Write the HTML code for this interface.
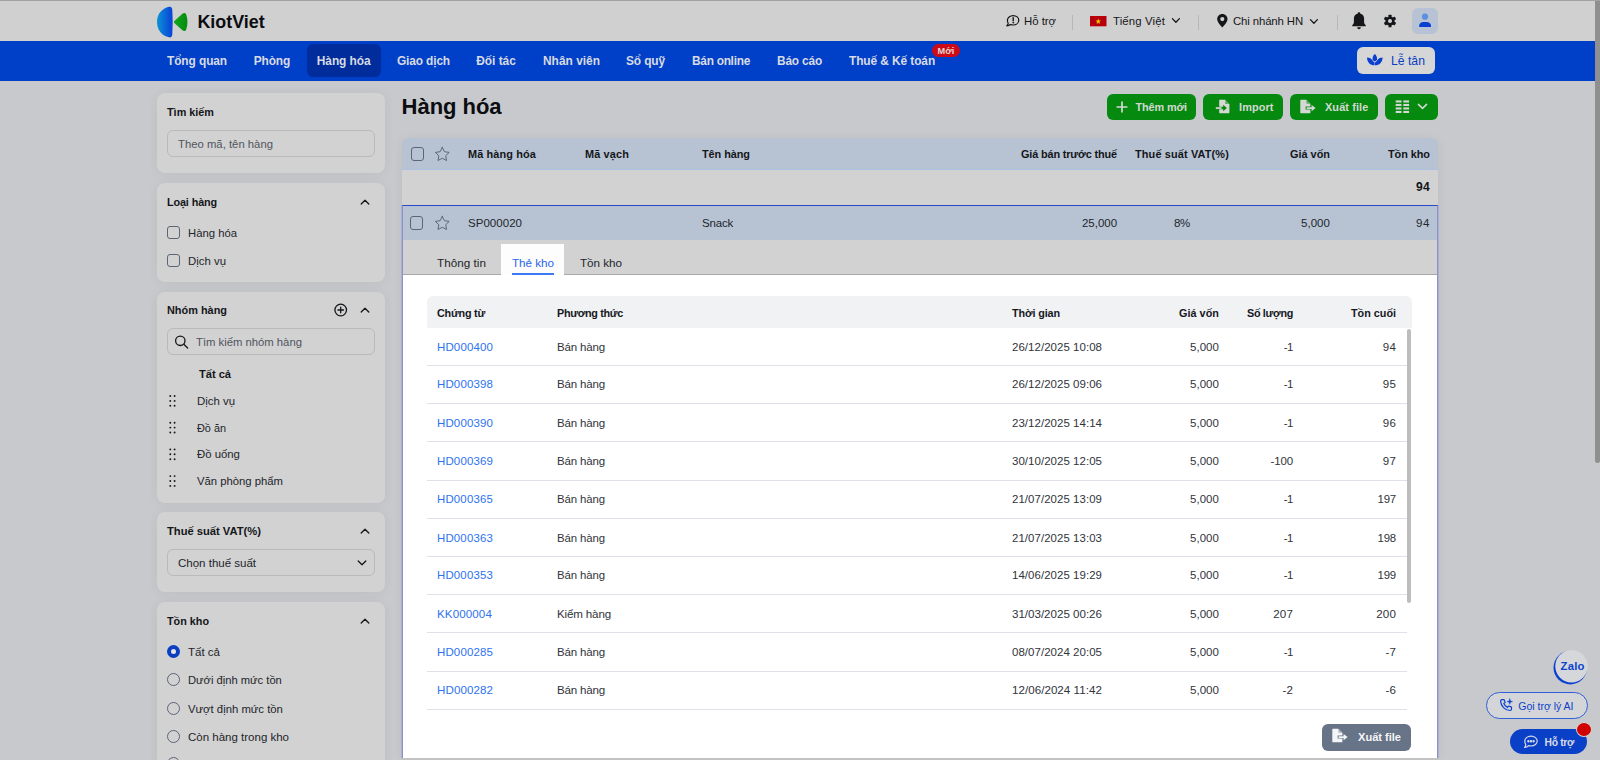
<!DOCTYPE html>
<html lang="vi">
<head>
<meta charset="utf-8">
<title>Hàng hóa - KiotViet</title>
<style>
*{box-sizing:border-box;margin:0;padding:0}
html,body{width:1600px;height:760px;overflow:hidden}
body{background:#c8c9cc;font-family:"Liberation Sans",sans-serif;position:relative}
.a{position:absolute}
.t{position:absolute;white-space:nowrap;font-family:"Liberation Sans",sans-serif}
.card{position:absolute;left:157px;width:228px;background:#d2d2d2;border-radius:8px;box-shadow:0 1px 12px rgba(0,0,0,.06)}
.inp{position:absolute;left:167px;width:208px;height:27px;border:1px solid #b9babd;border-radius:6px;background:#d2d2d2}
.cb{position:absolute;width:13px;height:13px;border:1.2px solid #5b6574;border-radius:3px}
.rd{position:absolute;width:13px;height:13px;border:1.1px solid #5b6574;border-radius:50%}
.sep{position:absolute;top:15px;width:1px;height:15px;background:#b6b7ba}
.gbtn{position:absolute;top:94px;height:26px;background:#05890f;border-radius:6px}
.hl{position:absolute;left:427px;width:980px;height:1px;background:#dfe1e8}
svg{position:absolute;overflow:visible}
</style>
</head>
<body>
<!-- header -->
<div class="a" style="left:0;top:0;width:1595px;height:41px;background:#d0d0d0"></div>
<div class="a" style="left:0;top:0;width:1600px;height:1px;background:#a1a2a2"></div>
<!-- nav -->
<div class="a" style="left:0;top:41px;width:1595px;height:40px;background:#0040c8"></div>
<div class="a" style="left:307px;top:44px;width:74px;height:33px;background:#002c9c;border-radius:6px"></div>
<div class="a" style="left:932px;top:44px;width:28px;height:13px;background:#cf0a16;border-radius:7px"></div>
<div class="a" style="left:1357px;top:47px;width:78px;height:27px;background:#d6d6d6;border-radius:6px"></div>
<!-- page scrollbar -->
<div class="a" style="left:1595px;top:1px;width:5px;height:462px;background:#8f8f8f;border-radius:0 0 3px 3px"></div>
<!-- header right -->
<div class="sep" style="left:1072px"></div>
<div class="sep" style="left:1198px"></div>
<div class="sep" style="left:1337px"></div>
<div class="a" style="left:1412px;top:8px;width:26px;height:26px;background:#b7c3d4;border-radius:6px"></div>
<!-- sidebar cards -->
<div class="card" style="top:93px;height:80px"></div>
<div class="card" style="top:183px;height:99px"></div>
<div class="card" style="top:292px;height:211px"></div>
<div class="card" style="top:512px;height:80px"></div>
<div class="card" style="top:602px;height:170px"></div>
<div class="inp" style="top:130px"></div>
<div class="inp" style="top:328px"></div>
<div class="inp" style="top:549px"></div>
<div class="cb" style="left:167px;top:226px"></div>
<div class="cb" style="left:167px;top:254px"></div>
<div class="rd" style="left:167px;top:645px;border:4px solid #0a3fc4;background:#e6e6e6"></div>
<div class="rd" style="left:167px;top:673px"></div>
<div class="rd" style="left:167px;top:702px"></div>
<div class="rd" style="left:167px;top:730px"></div>
<div class="rd" style="left:167px;top:757px"></div>
<!-- main table -->
<div class="a" style="left:402px;top:138px;width:1036px;height:620px;border-radius:7px 7px 0 0;box-shadow:0 1px 12px rgba(0,0,0,.06)"></div>
<div class="a" style="left:402px;top:138px;width:1036px;height:32px;background:#b7c3d3;border-radius:7px 7px 0 0;border-bottom:1px solid #acc2e2"></div>
<div class="a" style="left:402px;top:170px;width:1036px;height:35px;background:#d2d2d2"></div>
<div class="a" style="left:402px;top:205px;width:1036px;height:35px;background:#b7c3d3"></div>
<div class="a" style="left:402px;top:240px;width:1036px;height:35px;background:#d2d2d2;border-bottom:1px solid #a8a9ab"></div>
<div class="a" style="left:501px;top:244px;width:63px;height:31px;background:#fdfdfe"></div>
<div class="a" style="left:512px;top:273px;width:42px;height:2px;background:#3b7af2"></div>
<div class="a" style="left:402px;top:275px;width:1036px;height:483px;background:#fff"></div>
<div class="a" style="left:402px;top:758px;width:1036px;height:2px;background:#c3c3c4"></div>
<div class="a" style="left:401px;top:205px;width:1038px;height:553px;border-left:1px solid #aab0d0;border-right:1px solid #aab0d0"></div>
<div class="a" style="left:402px;top:205px;width:1036px;height:553px;border:1px solid #8a91cd;border-top:1px solid #2848c8;border-bottom:none"></div>
<div class="cb" style="left:411px;top:147px;height:14px"></div>
<div class="cb" style="left:410px;top:216px;height:14px"></div>
<!-- inner table -->
<div class="a" style="left:427px;top:296px;width:985px;height:32px;background:#f1f2f4;border-radius:6px 6px 0 0"></div>

<div class="hl" style="top:365px"></div>
<div class="hl" style="top:403px"></div>
<div class="hl" style="top:441px"></div>
<div class="hl" style="top:480px"></div>
<div class="hl" style="top:518px"></div>
<div class="hl" style="top:556px"></div>
<div class="hl" style="top:594px"></div>
<div class="hl" style="top:632px"></div>
<div class="hl" style="top:671px"></div>
<div class="hl" style="top:709px"></div>
<div class="a" style="left:1407px;top:329px;width:4px;height:274px;background:#bdbdbd;border-radius:2px"></div>
<div class="a" style="left:1322px;top:724px;width:89px;height:27px;background:#677387;border-radius:6px"></div>
<!-- green buttons -->
<div class="gbtn" style="left:1107px;width:89px"></div>
<div class="gbtn" style="left:1203px;width:80px"></div>
<div class="gbtn" style="left:1290px;width:88px"></div>
<div class="gbtn" style="left:1385px;width:53px"></div>
<!-- floating -->
<div class="a" style="left:1486px;top:692px;width:102px;height:27px;border:1px solid #2f5fd6;border-radius:13.5px;background:#d4d5d8"></div>
<div class="a" style="left:1510px;top:729px;width:77px;height:25px;background:#0a40c8;border-radius:12.5px"></div>
<div class="a" style="left:1576px;top:722px;width:16px;height:15px;background:#d00000;border-radius:50%;border:1px solid #d2d2d4"></div>
<!-- logo -->
<svg style="left:156px;top:5px" width="34" height="34" viewBox="156 5 34 34">
<defs>
<linearGradient id="lgb" x1="0" y1="0" x2="1" y2="0"><stop offset="0" stop-color="#0a93d6"/><stop offset="1" stop-color="#0a3fd8"/></linearGradient>
<linearGradient id="lgg" x1="0" y1="0" x2="1" y2="0"><stop offset="0" stop-color="#10a81a"/><stop offset="1" stop-color="#088a10"/></linearGradient>
</defs>
<path d="M169 6.8 C162 8.4 157 14 157 22 C157 30 162 35.8 169 37.3 C171.2 37.8 172.2 36.4 172.3 34 C172.8 26 172.8 18 172.3 10 C172.2 7.6 171.2 6.3 169 6.8 Z" fill="url(#lgb)"/>
<path d="M174.6 20.7 L182.4 13.7 C183.9 12.4 185.6 12.7 186.2 14.6 C187.9 19.4 187.9 24.6 186.2 29.4 C185.6 31.3 183.9 31.6 182.4 30.3 L174.6 23.3 C173.7 22.5 173.7 21.5 174.6 20.7 Z" fill="url(#lgg)"/>
</svg>
<!-- header: chat icon -->
<svg style="left:1005px;top:14px" width="16" height="14" viewBox="1005 14 16 14" fill="none" stroke="#14161a" stroke-width="1.2" stroke-linecap="round" stroke-linejoin="round">
<path d="M1013.2 15.6 C1016.4 15.6 1018.8 17.7 1018.8 20.3 C1018.8 22.9 1016.4 25 1013.2 25 C1012.2 25 1011.3 24.8 1010.5 24.5 C1009.6 25.3 1008.2 25.8 1006.8 25.8 C1007.6 25.1 1008.1 24.2 1008.2 23.3 C1007.7 22.5 1007.4 21.4 1007.4 20.3 C1007.4 17.7 1010 15.6 1013.2 15.6 Z"/>
<path d="M1013.2 17.8 V20.8" stroke-width="1.4"/><circle cx="1013.2" cy="22.7" r="0.5" fill="#14161a" stroke-width="0.6"/>
</svg>
<!-- flag -->
<svg style="left:1090px;top:16px" width="17" height="11" viewBox="0 0 17 11"><rect width="16.5" height="10.3" fill="#b8000b"/><path d="M8.25 2.6 L8.95 4.6 L11.05 4.6 L9.35 5.85 L10 7.9 L8.25 6.65 L6.5 7.9 L7.15 5.85 L5.45 4.6 L7.55 4.6 Z" fill="#e8d000"/></svg>
<!-- chevrons header -->
<svg style="left:1171px;top:17px" width="10" height="8" viewBox="0 0 10 8" fill="none" stroke="#14161a" stroke-width="1.3" stroke-linecap="round" stroke-linejoin="round"><path d="M1.4 1.6 L4.9 5.2 L8.4 1.6"/></svg>
<svg style="left:1309px;top:17.5px" width="10" height="8" viewBox="0 0 10 8" fill="none" stroke="#14161a" stroke-width="1.3" stroke-linecap="round" stroke-linejoin="round"><path d="M1.4 1.6 L4.9 5.2 L8.4 1.6"/></svg>
<!-- pin -->
<svg style="left:1217px;top:14px" width="11" height="14" viewBox="0 0 11 14"><path fill-rule="evenodd" d="M5.3 0 C8.2 0 10.5 2.2 10.5 5 C10.5 8.4 6.6 12.2 5.3 13.4 C4 12.2 0.2 8.4 0.2 5 C0.2 2.2 2.4 0 5.3 0 Z M5.3 3 A2.1 2.1 0 1 0 5.3 7.2 A2.1 2.1 0 1 0 5.3 3 Z" fill="#14161a"/></svg>
<!-- bell -->
<svg style="left:1352px;top:12px" width="14" height="18" viewBox="0 0 14 18"><path d="M7 0.2 C7.7 0.2 8.2 0.7 8.2 1.4 C10.6 1.9 12.1 4 12.1 6.6 V10 C12.1 11.3 12.7 12.3 13.7 13.2 C14 13.5 13.8 14.2 13.3 14.2 H0.7 C0.2 14.2 0 13.5 0.3 13.2 C1.3 12.3 1.9 11.3 1.9 10 V6.6 C1.9 4 3.4 1.9 5.8 1.4 C5.8 0.7 6.3 0.2 7 0.2 Z M5.2 15.2 H8.8 C8.8 16.3 8 17.2 7 17.2 C6 17.2 5.2 16.3 5.2 15.2 Z" fill="#14161a"/></svg>
<!-- gear -->
<svg style="left:1383px;top:14px" width="14" height="14" viewBox="-7 -7 14 14"><g fill="#14161a"><circle r="4.6"/><g id="tooth"><rect x="-1.5" y="-6.3" width="3" height="12.6" rx="0.6"/></g><rect x="-1.5" y="-6.3" width="3" height="12.6" rx="0.6" transform="rotate(60)"/><rect x="-1.5" y="-6.3" width="3" height="12.6" rx="0.6" transform="rotate(120)"/></g><circle r="2" fill="#d1d1d1"/></svg>
<!-- avatar person -->
<svg style="left:1412px;top:8px" width="26" height="26" viewBox="1412 8 26 26"><circle cx="1425" cy="16.7" r="3.1" fill="#5b8fe0"/><path d="M1419.2 26.9 V25.4 C1419.2 23.3 1421.2 21.9 1423.4 21.9 H1426.6 C1428.8 21.9 1431 23.3 1431 25.4 V26.9 Z" fill="#0a40d0"/></svg>
<!-- lotus -->
<svg style="left:1367px;top:54px" width="16" height="12" viewBox="0 0 16 12" fill="#0a3fd0"><path d="M7.8 0 C9.4 1.4 10.2 3.2 10 5.4 C9.4 6.3 8.7 7 7.8 7.6 C6.9 7 6.2 6.3 5.6 5.4 C5.4 3.2 6.2 1.4 7.8 0 Z"/><path d="M0 3.4 C2.2 3.4 4 4.2 5.2 5.9 C5.9 7 6.7 7.8 7.6 8.4 L7.6 11.3 C3.2 11.3 0.1 8.2 0 3.4 Z"/><path d="M15.6 3.4 C13.4 3.4 11.6 4.2 10.4 5.9 C9.7 7 8.9 7.8 8 8.4 L8 11.3 C12.4 11.3 15.5 8.2 15.6 3.4 Z"/></svg>
<!-- green buttons icons -->
<svg style="left:1116px;top:101px" width="12" height="12" viewBox="0 0 12 12" stroke="#d6d8d6" stroke-width="1.7" stroke-linecap="round"><path d="M6 1.2 V10.8 M1.2 6 H10.8"/></svg>
<svg style="left:1215px;top:99px" width="16" height="15" viewBox="0 0 16 15"><path d="M4.2 0.8 H10.2 L14.4 5 V13.4 C14.4 13.9 14 14.3 13.5 14.3 H5.1 C4.6 14.3 4.2 13.9 4.2 13.4 V10.3 H8.2 V12.3 L11.9 9 L8.2 5.8 V7.8 H4.2 V1.7 C4.2 1.2 4.6 0.8 4.2 0.8 Z" fill="#d6d8d6"/><path d="M0.8 8.2 H6.6 V9.9 H0.8 Z" fill="#d6d8d6"/><path d="M10.2 0.8 V5 H14.4 Z" fill="#05890f" opacity="0.55"/></svg>
<svg style="left:1300px;top:99px" width="17" height="15" viewBox="0 0 17 15"><path d="M0.9 0.8 H6.4 L10.4 4.8 V7.6 H5.6 V10.6 H10.4 V13.4 C10.4 13.9 10 14.3 9.5 14.3 H0.9 C0.4 14.3 0.3 13.9 0.3 13.4 V1.7 C0.3 1.2 0.4 0.8 0.9 0.8 Z" fill="#d6d8d6"/><path d="M6.6 8.3 H11.6 V6 L15.6 9.1 L11.6 12.2 V9.9 H6.6 Z" fill="#d6d8d6"/><path d="M6.4 0.8 V4.8 H10.4 Z" fill="#05890f" opacity="0.55"/></svg>
<svg style="left:1395px;top:100px" width="15" height="14" viewBox="0 0 15 14" fill="#d6d8d6"><rect x="0.7" y="0.4" width="5.8" height="2.1"/><rect x="8.3" y="0.4" width="5.8" height="2.1"/><rect x="0.7" y="3.9" width="5.8" height="2.1"/><rect x="8.3" y="3.9" width="5.8" height="2.1"/><rect x="0.7" y="7.4" width="5.8" height="2.1"/><rect x="8.3" y="7.4" width="5.8" height="2.1"/><rect x="0.7" y="10.9" width="5.8" height="2.1"/><rect x="8.3" y="10.9" width="5.8" height="2.1"/></svg>
<svg style="left:1417px;top:103px" width="11" height="8" viewBox="0 0 11 8" fill="none" stroke="#d6d8d6" stroke-width="1.5" stroke-linecap="round" stroke-linejoin="round"><path d="M1.4 1.4 L5.5 5.4 L9.6 1.4"/></svg>
<!-- sidebar chevrons up -->
<svg class="cu" style="left:360px;top:198px" width="10" height="8" viewBox="0 0 10 8" fill="none" stroke="#14161a" stroke-width="1.3" stroke-linecap="round" stroke-linejoin="round"><path d="M1.2 6 L5 2.2 L8.8 6"/></svg>
<svg class="cu" style="left:360px;top:306px" width="10" height="8" viewBox="0 0 10 8" fill="none" stroke="#14161a" stroke-width="1.3" stroke-linecap="round" stroke-linejoin="round"><path d="M1.2 6 L5 2.2 L8.8 6"/></svg>
<svg class="cu" style="left:360px;top:527px" width="10" height="8" viewBox="0 0 10 8" fill="none" stroke="#14161a" stroke-width="1.3" stroke-linecap="round" stroke-linejoin="round"><path d="M1.2 6 L5 2.2 L8.8 6"/></svg>
<svg class="cu" style="left:360px;top:617px" width="10" height="8" viewBox="0 0 10 8" fill="none" stroke="#14161a" stroke-width="1.3" stroke-linecap="round" stroke-linejoin="round"><path d="M1.2 6 L5 2.2 L8.8 6"/></svg>
<!-- select chevron -->
<svg style="left:357px;top:559px" width="10" height="8" viewBox="0 0 10 8" fill="none" stroke="#14161a" stroke-width="1.3" stroke-linecap="round" stroke-linejoin="round"><path d="M1.2 2 L5 5.8 L8.8 2"/></svg>
<!-- plus circle -->
<svg style="left:334px;top:303px" width="14" height="14" viewBox="0 0 14 14" fill="none" stroke="#14161a" stroke-width="1.3" stroke-linecap="round"><circle cx="6.7" cy="7" r="5.8"/><path d="M6.7 4.2 V9.8 M3.9 7 H9.5"/></svg>
<!-- search -->
<svg style="left:174px;top:335px" width="16" height="15" viewBox="0 0 16 15" fill="none" stroke="#14161a" stroke-width="1.3" stroke-linecap="round"><circle cx="6.3" cy="5.8" r="4.7"/><path d="M9.8 9.3 L13.6 13"/></svg>
<!-- drag handles -->
<svg style="left:169px;top:394px" width="8" height="94" viewBox="0 0 8 94" fill="#14161a"><circle cx="1.3" cy="2.0" r="0.95"/><circle cx="5.6" cy="2.0" r="0.95"/><circle cx="1.3" cy="6.9" r="0.95"/><circle cx="5.6" cy="6.9" r="0.95"/><circle cx="1.3" cy="11.8" r="0.95"/><circle cx="5.6" cy="11.8" r="0.95"/><circle cx="1.3" cy="28.7" r="0.95"/><circle cx="5.6" cy="28.7" r="0.95"/><circle cx="1.3" cy="33.6" r="0.95"/><circle cx="5.6" cy="33.6" r="0.95"/><circle cx="1.3" cy="38.5" r="0.95"/><circle cx="5.6" cy="38.5" r="0.95"/><circle cx="1.3" cy="55.4" r="0.95"/><circle cx="5.6" cy="55.4" r="0.95"/><circle cx="1.3" cy="60.3" r="0.95"/><circle cx="5.6" cy="60.3" r="0.95"/><circle cx="1.3" cy="65.2" r="0.95"/><circle cx="5.6" cy="65.2" r="0.95"/><circle cx="1.3" cy="82.1" r="0.95"/><circle cx="5.6" cy="82.1" r="0.95"/><circle cx="1.3" cy="87.0" r="0.95"/><circle cx="5.6" cy="87.0" r="0.95"/><circle cx="1.3" cy="91.9" r="0.95"/><circle cx="5.6" cy="91.9" r="0.95"/></svg>
<!-- stars -->
<svg style="left:434.3px;top:145.6px" width="16.56" height="16.56" viewBox="0 0 24 24" fill="none" stroke="#566070" stroke-width="1.35" stroke-linejoin="round" stroke-linecap="round"><polygon points="12 2 15.09 8.26 22 9.27 17 14.14 18.18 21.02 12 17.77 5.82 21.02 7 14.14 2 9.27 8.91 8.26 12 2"/></svg>
<svg style="left:434.3px;top:214.8px" width="16.56" height="16.56" viewBox="0 0 24 24" fill="none" stroke="#566070" stroke-width="1.35" stroke-linejoin="round" stroke-linecap="round"><polygon points="12 2 15.09 8.26 22 9.27 17 14.14 18.18 21.02 12 17.77 5.82 21.02 7 14.14 2 9.27 8.91 8.26 12 2"/></svg>
<!-- gray export icon -->
<svg style="left:1332px;top:728px" width="17" height="15" viewBox="0 0 17 15"><path d="M0.9 0.8 H6.4 L10.4 4.8 V7.6 H5.6 V10.6 H10.4 V13.4 C10.4 13.9 10 14.3 9.5 14.3 H0.9 C0.4 14.3 0.3 13.9 0.3 13.4 V1.7 C0.3 1.2 0.4 0.8 0.9 0.8 Z" fill="#f4f5f7"/><path d="M6.6 8.3 H11.6 V6 L15.6 9.1 L11.6 12.2 V9.9 H6.6 Z" fill="#f4f5f7"/><path d="M6.4 0.8 V4.8 H10.4 Z" fill="#667085" opacity="0.5"/></svg>
<!-- zalo swoosh -->
<svg style="left:1550px;top:648px" width="40" height="40" viewBox="1550 648 40 40"><circle cx="1570.3" cy="667.6" r="16.8" fill="#0a40d0"/><circle cx="1571.5" cy="666.2" r="16.2" fill="#d6d7da"/></svg>
<!-- phone AI icon -->
<svg style="left:1499px;top:698px" width="16" height="15" viewBox="0 0 16 15" fill="none" stroke="#0a40d0" stroke-width="1.2" stroke-linecap="round" stroke-linejoin="round"><path d="M3.2 1.6 H5.1 L6.2 4.4 L4.8 5.5 C5.5 7.2 6.9 8.6 8.6 9.4 L9.7 8 L12.5 9.1 V11 C12.5 11.8 11.8 12.5 11 12.5 C5.9 12.2 1.9 8.2 1.6 3.1 C1.6 2.3 2.3 1.6 3.2 1.6 Z"/><path d="M10.8 0.8 L11.5 2.9 L13.6 3.6 L11.5 4.3 L10.8 6.4 L10.1 4.3 L8 3.6 L10.1 2.9 Z" fill="#0a40d0" stroke-width="0.4"/></svg>
<!-- chat icon bottom -->
<svg style="left:1523px;top:735px" width="16" height="14" viewBox="0 0 16 14" fill="none" stroke="#d8dce6" stroke-width="1.2" stroke-linecap="round" stroke-linejoin="round"><path d="M8 1.2 C11.6 1.2 14.2 3.4 14.2 6.1 C14.2 8.8 11.6 11 8 11 C7.1 11 6.3 10.9 5.5 10.6 C4.6 11.6 3.2 12.3 1.6 12.4 C2.4 11.6 2.8 10.6 2.8 9.6 C2.1 8.6 1.8 7.4 1.8 6.1 C1.8 3.4 4.4 1.2 8 1.2 Z"/><circle cx="5.4" cy="6.2" r="0.6" fill="#d8dce6"/><circle cx="8" cy="6.2" r="0.6" fill="#d8dce6"/><circle cx="10.6" cy="6.2" r="0.6" fill="#d8dce6"/></svg>

<span class="t" style="left:197.4px;top:11.000px;font-size:17.9px;line-height:23px;color:#0c0d10;letter-spacing:0.01px;font-weight:700">KiotViet</span>
<span class="t" style="left:1024px;top:14.000px;font-size:11.4px;line-height:15px;color:#14161a;letter-spacing:-0.03px">Hỗ trợ</span>
<span class="t" style="left:1113px;top:14.000px;font-size:11.4px;line-height:15px;color:#14161a;letter-spacing:0.13px">Tiếng Việt</span>
<span class="t" style="left:1233px;top:14.000px;font-size:11.4px;line-height:15px;color:#14161a;letter-spacing:-0.13px">Chi nhánh HN</span>
<span class="t" style="left:167px;top:53.000px;font-size:11.9px;line-height:17px;color:#d8dbe4;letter-spacing:-0.08px;font-weight:700">Tổng quan</span>
<span class="t" style="left:253.8px;top:53.000px;font-size:11.9px;line-height:17px;color:#d8dbe4;letter-spacing:-0.16px;font-weight:700">Phòng</span>
<span class="t" style="left:316.8px;top:53.000px;font-size:11.9px;line-height:17px;color:#d8dbe4;letter-spacing:-0.06px;font-weight:700">Hàng hóa</span>
<span class="t" style="left:397px;top:53.000px;font-size:11.9px;line-height:17px;color:#d8dbe4;letter-spacing:-0.13px;font-weight:700">Giao dịch</span>
<span class="t" style="left:476.3px;top:53.000px;font-size:11.9px;line-height:17px;color:#d8dbe4;letter-spacing:-0.02px;font-weight:700">Đối tác</span>
<span class="t" style="left:543px;top:53.000px;font-size:11.9px;line-height:17px;color:#d8dbe4;letter-spacing:0.02px;font-weight:700">Nhân viên</span>
<span class="t" style="left:626px;top:53.000px;font-size:11.9px;line-height:17px;color:#d8dbe4;letter-spacing:-0.11px;font-weight:700">Sổ quỹ</span>
<span class="t" style="left:692px;top:53.000px;font-size:11.9px;line-height:17px;color:#d8dbe4;letter-spacing:-0.28px;font-weight:700">Bán online</span>
<span class="t" style="left:777px;top:53.000px;font-size:11.9px;line-height:17px;color:#d8dbe4;letter-spacing:-0.18px;font-weight:700">Báo cáo</span>
<span class="t" style="left:849px;top:53.000px;font-size:11.9px;line-height:17px;color:#d8dbe4;letter-spacing:-0.08px;font-weight:700">Thuế &amp; Kế toán</span>
<span class="t" style="left:937.5px;top:45.000px;font-size:9.2px;line-height:12px;color:#e6d2d2;letter-spacing:0.01px;font-weight:700">Mới</span>
<span class="t" style="left:1391px;top:53.000px;font-size:12.2px;line-height:16px;color:#0a3fc0;letter-spacing:0.01px">Lễ tân</span>
<span class="t" style="left:167px;top:105.000px;font-size:10.8px;line-height:15px;color:#14161a;letter-spacing:0.02px;font-weight:700">Tìm kiếm</span>
<span class="t" style="left:178px;top:137.000px;font-size:11.3px;line-height:15px;color:#50555e;letter-spacing:0.01px">Theo mã, tên hàng</span>
<span class="t" style="left:167px;top:195.000px;font-size:10.8px;line-height:15px;color:#14161a;letter-spacing:-0.11px;font-weight:700">Loại hàng</span>
<span class="t" style="left:188px;top:226.000px;font-size:11.3px;line-height:15px;color:#22252b">Hàng hóa</span>
<span class="t" style="left:188px;top:254.000px;font-size:11.4px;line-height:15px;color:#22252b">Dịch vụ</span>
<span class="t" style="left:167px;top:303.000px;font-size:10.9px;line-height:15px;color:#14161a;letter-spacing:0.01px;font-weight:700">Nhóm hàng</span>
<span class="t" style="left:196px;top:335.000px;font-size:11.3px;line-height:15px;color:#50555e;letter-spacing:-0.01px">Tìm kiếm nhóm hàng</span>
<span class="t" style="left:199px;top:367.000px;font-size:11.1px;line-height:15px;color:#14161a;letter-spacing:-0.02px;font-weight:700">Tất cả</span>
<span class="t" style="left:197px;top:394.000px;font-size:11.4px;line-height:15px;color:#22252b">Dịch vụ</span>
<span class="t" style="left:197px;top:421.000px;font-size:10.9px;line-height:15px;color:#22252b;letter-spacing:-0.02px">Đồ ăn</span>
<span class="t" style="left:197px;top:447.000px;font-size:11.4px;line-height:15px;color:#22252b;letter-spacing:-0.02px">Đồ uống</span>
<span class="t" style="left:197px;top:474.000px;font-size:11.3px;line-height:15px;color:#22252b;letter-spacing:-0.01px">Văn phòng phẩm</span>
<span class="t" style="left:167px;top:524.000px;font-size:11.2px;line-height:15px;color:#14161a;letter-spacing:-0.01px;font-weight:700">Thuế suất VAT(%)</span>
<span class="t" style="left:178px;top:556.000px;font-size:11.5px;line-height:15px;color:#22252b">Chọn thuế suất</span>
<span class="t" style="left:167px;top:614.000px;font-size:10.8px;line-height:15px;color:#14161a;font-weight:700">Tồn kho</span>
<span class="t" style="left:188px;top:645.000px;font-size:11.5px;line-height:15px;color:#22252b;letter-spacing:0.01px">Tất cả</span>
<span class="t" style="left:188px;top:673.000px;font-size:11.2px;line-height:15px;color:#22252b">Dưới định mức tồn</span>
<span class="t" style="left:188px;top:702.000px;font-size:11.3px;line-height:15px;color:#22252b;letter-spacing:0.01px">Vượt định mức tồn</span>
<span class="t" style="left:188px;top:730.000px;font-size:11.5px;line-height:15px;color:#22252b">Còn hàng trong kho</span>
<span class="t" style="left:401.6px;top:93.000px;font-size:22.0px;line-height:28px;color:#0c0d10;letter-spacing:-0.03px;font-weight:700">Hàng hóa</span>
<span class="t" style="left:1135.6px;top:100.000px;font-size:10.9px;line-height:15px;color:#d4d8d4;letter-spacing:-0.15px;font-weight:700">Thêm mới</span>
<span class="t" style="left:1239px;top:100.000px;font-size:10.9px;line-height:15px;color:#d4d8d4;letter-spacing:0.11px;font-weight:700">Import</span>
<span class="t" style="left:1325px;top:100.000px;font-size:10.9px;line-height:15px;color:#d4d8d4;letter-spacing:0.11px;font-weight:700">Xuất file</span>
<span class="t" style="left:468px;top:147.000px;font-size:10.9px;line-height:15px;color:#14161a;letter-spacing:0.13px;font-weight:700">Mã hàng hóa</span>
<span class="t" style="left:585px;top:147.000px;font-size:10.9px;line-height:15px;color:#14161a;letter-spacing:0.14px;font-weight:700">Mã vạch</span>
<span class="t" style="left:702px;top:147.000px;font-size:10.9px;line-height:15px;color:#14161a;letter-spacing:-0.06px;font-weight:700">Tên hàng</span>
<span class="t" style="left:1021px;top:147.000px;font-size:10.9px;line-height:15px;color:#14161a;letter-spacing:-0.15px;font-weight:700">Giá bán trước thuế</span>
<span class="t" style="left:1135px;top:147.000px;font-size:10.9px;line-height:15px;color:#14161a;letter-spacing:0.15px;font-weight:700">Thuế suất VAT(%)</span>
<span class="t" style="left:1290px;top:147.000px;font-size:10.9px;line-height:15px;color:#14161a;font-weight:700">Giá vốn</span>
<span class="t" style="left:1388px;top:147.000px;font-size:10.9px;line-height:15px;color:#14161a;letter-spacing:-0.06px;font-weight:700">Tồn kho</span>
<span class="t" style="left:1416px;top:180.000px;font-size:12.1px;line-height:15px;color:#14161a;letter-spacing:0.27px;font-weight:700">94</span>
<span class="t" style="left:468px;top:216.000px;font-size:11.5px;line-height:15px;color:#22252b;letter-spacing:0.04px">SP000020</span>
<span class="t" style="left:702px;top:216.000px;font-size:11.5px;line-height:15px;color:#22252b;letter-spacing:-0.19px">Snack</span>
<span class="t" style="left:1082px;top:216.000px;font-size:11.5px;line-height:15px;color:#22252b;letter-spacing:-0.03px">25,000</span>
<span class="t" style="left:1174px;top:216.000px;font-size:11.5px;line-height:15px;color:#22252b;letter-spacing:-0.31px">8%</span>
<span class="t" style="left:1301px;top:216.000px;font-size:11.5px;line-height:15px;color:#22252b;letter-spacing:0.04px">5,000</span>
<span class="t" style="left:1416px;top:216.000px;font-size:11.5px;line-height:15px;color:#22252b;letter-spacing:0.60px">94</span>
<span class="t" style="left:437px;top:255.000px;font-size:11.7px;line-height:15px;color:#22252b;letter-spacing:0.02px">Thông tin</span>
<span class="t" style="left:512px;top:255.000px;font-size:11.7px;line-height:15px;color:#2a66ea;letter-spacing:-0.04px">Thẻ kho</span>
<span class="t" style="left:580px;top:255.000px;font-size:11.7px;line-height:15px;color:#22252b;letter-spacing:-0.04px">Tồn kho</span>
<span class="t" style="left:437px;top:306.000px;font-size:10.8px;line-height:15px;color:#16181d;letter-spacing:-0.23px;font-weight:700">Chứng từ</span>
<span class="t" style="left:557px;top:306.000px;font-size:10.8px;line-height:15px;color:#16181d;letter-spacing:-0.32px;font-weight:700">Phương thức</span>
<span class="t" style="left:1012px;top:306.000px;font-size:10.8px;line-height:15px;color:#16181d;letter-spacing:-0.12px;font-weight:700">Thời gian</span>
<span class="t" style="left:1179px;top:306.000px;font-size:10.8px;line-height:15px;color:#16181d;letter-spacing:0.05px;font-weight:700">Giá vốn</span>
<span class="t" style="left:1247px;top:306.000px;font-size:10.8px;line-height:15px;color:#16181d;letter-spacing:-0.31px;font-weight:700">Số lượng</span>
<span class="t" style="left:1351px;top:306.000px;font-size:10.8px;line-height:15px;color:#16181d;font-weight:700">Tồn cuối</span>
<span class="t" style="left:437px;top:340.000px;font-size:11.5px;line-height:15px;color:#2d73ee;letter-spacing:0.13px">HD000400</span>
<span class="t" style="left:557px;top:340.000px;font-size:11.5px;line-height:15px;color:#30343b;letter-spacing:-0.16px">Bán hàng</span>
<span class="t" style="left:1012px;top:340.000px;font-size:11.5px;line-height:15px;color:#30343b;letter-spacing:0.03px">26/12/2025 10:08</span>
<span class="t" style="left:1190px;top:340.000px;font-size:11.5px;line-height:15px;color:#30343b;letter-spacing:0.04px">5,000</span>
<span class="t" style="left:1283.8px;top:340.000px;font-size:11.5px;line-height:15px;color:#30343b;letter-spacing:-0.52px">-1</span>
<span class="t" style="left:1382.8px;top:340.000px;font-size:11.5px;line-height:15px;color:#30343b;letter-spacing:0.20px">94</span>
<span class="t" style="left:437px;top:377.000px;font-size:11.5px;line-height:15px;color:#2d73ee;letter-spacing:0.13px">HD000398</span>
<span class="t" style="left:557px;top:377.000px;font-size:11.5px;line-height:15px;color:#30343b;letter-spacing:-0.16px">Bán hàng</span>
<span class="t" style="left:1012px;top:377.000px;font-size:11.5px;line-height:15px;color:#30343b;letter-spacing:0.03px">26/12/2025 09:06</span>
<span class="t" style="left:1190px;top:377.000px;font-size:11.5px;line-height:15px;color:#30343b;letter-spacing:0.04px">5,000</span>
<span class="t" style="left:1283.8px;top:377.000px;font-size:11.5px;line-height:15px;color:#30343b;letter-spacing:-0.52px">-1</span>
<span class="t" style="left:1382.8px;top:377.000px;font-size:11.5px;line-height:15px;color:#30343b;letter-spacing:0.20px">95</span>
<span class="t" style="left:437px;top:416.000px;font-size:11.5px;line-height:15px;color:#2d73ee;letter-spacing:0.13px">HD000390</span>
<span class="t" style="left:557px;top:416.000px;font-size:11.5px;line-height:15px;color:#30343b;letter-spacing:-0.16px">Bán hàng</span>
<span class="t" style="left:1012px;top:416.000px;font-size:11.5px;line-height:15px;color:#30343b;letter-spacing:0.03px">23/12/2025 14:14</span>
<span class="t" style="left:1190px;top:416.000px;font-size:11.5px;line-height:15px;color:#30343b;letter-spacing:0.04px">5,000</span>
<span class="t" style="left:1283.8px;top:416.000px;font-size:11.5px;line-height:15px;color:#30343b;letter-spacing:-0.52px">-1</span>
<span class="t" style="left:1382.8px;top:416.000px;font-size:11.5px;line-height:15px;color:#30343b;letter-spacing:0.20px">96</span>
<span class="t" style="left:437px;top:454.000px;font-size:11.5px;line-height:15px;color:#2d73ee;letter-spacing:0.13px">HD000369</span>
<span class="t" style="left:557px;top:454.000px;font-size:11.5px;line-height:15px;color:#30343b;letter-spacing:-0.16px">Bán hàng</span>
<span class="t" style="left:1012px;top:454.000px;font-size:11.5px;line-height:15px;color:#30343b;letter-spacing:0.03px">30/10/2025 12:05</span>
<span class="t" style="left:1190px;top:454.000px;font-size:11.5px;line-height:15px;color:#30343b;letter-spacing:0.04px">5,000</span>
<span class="t" style="left:1270.6px;top:454.000px;font-size:11.5px;line-height:15px;color:#30343b;letter-spacing:-0.16px">-100</span>
<span class="t" style="left:1382.8px;top:454.000px;font-size:11.5px;line-height:15px;color:#30343b;letter-spacing:0.20px">97</span>
<span class="t" style="left:437px;top:492.000px;font-size:11.4px;line-height:15px;color:#2d73ee;letter-spacing:0.19px">HD000365</span>
<span class="t" style="left:557px;top:492.000px;font-size:11.4px;line-height:15px;color:#30343b;letter-spacing:-0.10px">Bán hàng</span>
<span class="t" style="left:1012px;top:492.000px;font-size:11.4px;line-height:15px;color:#30343b;letter-spacing:0.08px">21/07/2025 13:09</span>
<span class="t" style="left:1190px;top:492.000px;font-size:11.4px;line-height:15px;color:#30343b;letter-spacing:0.09px">5,000</span>
<span class="t" style="left:1283.8px;top:492.000px;font-size:11.4px;line-height:15px;color:#30343b;letter-spacing:-0.47px">-1</span>
<span class="t" style="left:1377.6px;top:492.000px;font-size:11.4px;line-height:15px;color:#30343b;letter-spacing:-0.21px">197</span>
<span class="t" style="left:437px;top:531.000px;font-size:11.4px;line-height:15px;color:#2d73ee;letter-spacing:0.19px">HD000363</span>
<span class="t" style="left:557px;top:531.000px;font-size:11.4px;line-height:15px;color:#30343b;letter-spacing:-0.10px">Bán hàng</span>
<span class="t" style="left:1012px;top:531.000px;font-size:11.4px;line-height:15px;color:#30343b;letter-spacing:0.08px">21/07/2025 13:03</span>
<span class="t" style="left:1190px;top:531.000px;font-size:11.4px;line-height:15px;color:#30343b;letter-spacing:0.09px">5,000</span>
<span class="t" style="left:1283.8px;top:531.000px;font-size:11.4px;line-height:15px;color:#30343b;letter-spacing:-0.47px">-1</span>
<span class="t" style="left:1377.6px;top:531.000px;font-size:11.4px;line-height:15px;color:#30343b;letter-spacing:-0.21px">198</span>
<span class="t" style="left:437px;top:568.000px;font-size:11.4px;line-height:15px;color:#2d73ee;letter-spacing:0.19px">HD000353</span>
<span class="t" style="left:557px;top:568.000px;font-size:11.4px;line-height:15px;color:#30343b;letter-spacing:-0.10px">Bán hàng</span>
<span class="t" style="left:1012px;top:568.000px;font-size:11.4px;line-height:15px;color:#30343b;letter-spacing:0.08px">14/06/2025 19:29</span>
<span class="t" style="left:1190px;top:568.000px;font-size:11.4px;line-height:15px;color:#30343b;letter-spacing:0.09px">5,000</span>
<span class="t" style="left:1283.8px;top:568.000px;font-size:11.4px;line-height:15px;color:#30343b;letter-spacing:-0.47px">-1</span>
<span class="t" style="left:1377.6px;top:568.000px;font-size:11.4px;line-height:15px;color:#30343b;letter-spacing:-0.21px">199</span>
<span class="t" style="left:437px;top:606.000px;font-size:11.6px;line-height:15px;color:#2d73ee;letter-spacing:0.10px">KK000004</span>
<span class="t" style="left:557px;top:606.000px;font-size:11.6px;line-height:15px;color:#30343b;letter-spacing:-0.16px">Kiểm hàng</span>
<span class="t" style="left:1012px;top:606.000px;font-size:11.6px;line-height:15px;color:#30343b;letter-spacing:-0.02px">31/03/2025 00:26</span>
<span class="t" style="left:1190px;top:606.000px;font-size:11.6px;line-height:15px;color:#30343b;letter-spacing:-0.01px">5,000</span>
<span class="t" style="left:1273.2px;top:606.000px;font-size:11.6px;line-height:15px;color:#30343b;letter-spacing:0.15px">207</span>
<span class="t" style="left:1376.2px;top:606.000px;font-size:11.6px;line-height:15px;color:#30343b;letter-spacing:0.15px">200</span>
<span class="t" style="left:437px;top:645.000px;font-size:11.5px;line-height:15px;color:#2d73ee;letter-spacing:0.13px">HD000285</span>
<span class="t" style="left:557px;top:645.000px;font-size:11.5px;line-height:15px;color:#30343b;letter-spacing:-0.16px">Bán hàng</span>
<span class="t" style="left:1012px;top:645.000px;font-size:11.5px;line-height:15px;color:#30343b;letter-spacing:0.03px">08/07/2024 20:05</span>
<span class="t" style="left:1190px;top:645.000px;font-size:11.5px;line-height:15px;color:#30343b;letter-spacing:0.04px">5,000</span>
<span class="t" style="left:1283.8px;top:645.000px;font-size:11.5px;line-height:15px;color:#30343b;letter-spacing:-0.52px">-1</span>
<span class="t" style="left:1385.4px;top:645.000px;font-size:11.5px;line-height:15px;color:#30343b;letter-spacing:0.18px">-7</span>
<span class="t" style="left:437px;top:682.000px;font-size:11.6px;line-height:15px;color:#2d73ee;letter-spacing:0.07px">HD000282</span>
<span class="t" style="left:557px;top:682.000px;font-size:11.6px;line-height:15px;color:#30343b;letter-spacing:-0.21px">Bán hàng</span>
<span class="t" style="left:1012px;top:682.000px;font-size:11.6px;line-height:15px;color:#30343b;letter-spacing:0.03px">12/06/2024 11:42</span>
<span class="t" style="left:1190px;top:682.000px;font-size:11.6px;line-height:15px;color:#30343b;letter-spacing:-0.01px">5,000</span>
<span class="t" style="left:1282.4px;top:682.000px;font-size:11.6px;line-height:15px;color:#30343b;letter-spacing:0.14px">-2</span>
<span class="t" style="left:1385.4px;top:682.000px;font-size:11.6px;line-height:15px;color:#30343b;letter-spacing:0.14px">-6</span>
<span class="t" style="left:1358px;top:730.000px;font-size:11.1px;line-height:15px;color:#f4f5f7;letter-spacing:-0.02px;font-weight:700">Xuất file</span>
<span class="t" style="left:1560.6px;top:659.000px;font-size:11.3px;line-height:14px;color:#0a44d0;letter-spacing:0.19px;font-weight:700">Zalo</span>
<span class="t" style="left:1518.3px;top:700.000px;font-size:10.5px;line-height:13px;color:#0a3fc8;letter-spacing:-0.01px">Gọi trợ lý AI</span>
<span class="t" style="left:1544.6px;top:736.000px;font-size:10.3px;line-height:14px;color:#d8dce6;letter-spacing:-0.33px;font-weight:700">Hỗ trợ</span>
</body>
</html>
